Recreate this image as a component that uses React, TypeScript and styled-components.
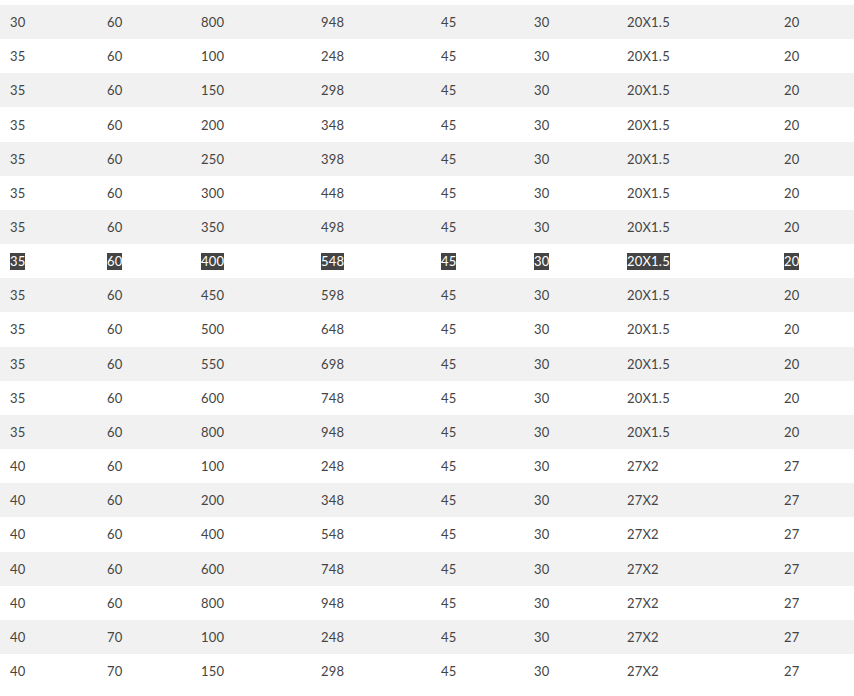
import React from "react";
import styled, { createGlobalStyle } from "styled-components";

const Global = createGlobalStyle`
  html, body { margin: 0; padding: 0; background: #fff; }
  body { font-family: "Lato", "Open Sans", sans-serif; }
`;

const Wrap = styled.div`
  padding-top: 5px;
  width: 854px;
  overflow: hidden;
`;

const Table = styled.table`
  width: 854px;
  border-collapse: collapse;
  border-spacing: 0;
  table-layout: fixed;
`;

const Row = styled.tr<{ $odd: boolean }>`
  background: ${(p) => (p.$odd ? "#f1f1f1" : "#ffffff")};
`;

const Cell = styled.td`
  height: 34.17px;
  box-sizing: border-box;
  padding: 1px 0 0 10px;
  font-size: 13px;
  font-weight: 400;
  color: #444;
  vertical-align: middle;
  white-space: nowrap;
  letter-spacing: 0.2px;
`;

const Sel = styled.span<{ $on: boolean }>`
  background: ${(p) => (p.$on ? "#444" : "transparent")};
  color: ${(p) => (p.$on ? "#fff" : "inherit")};
  line-height: 17px;
  display: inline-block;
`;

const widths = [97, 94, 120, 120, 93, 93, 157, 80];

const rows: string[][] = [
  ["30", "60", "800"],
  ["35", "60", "100"],
  ["35", "60", "150"],
  ["35", "60", "200"],
  ["35", "60", "250"],
  ["35", "60", "300"],
  ["35", "60", "350"],
  ["35", "60", "400"],
  ["35", "60", "450"],
  ["35", "60", "500"],
  ["35", "60", "550"],
  ["35", "60", "600"],
  ["35", "60", "800"],
  ["40", "60", "100"],
  ["40", "60", "200"],
  ["40", "60", "400"],
  ["40", "60", "600"],
  ["40", "60", "800"],
  ["40", "70", "100"],
  ["40", "70", "150"],
].map(([a, b, c]) => {
  const d = String(parseInt(c, 10) + 148);
  const is40 = a === "40";
  return [a, b, c, d, "45", "30", is40 ? "27X2" : "20X1.5", is40 ? "27" : "20"];
});

export default function App() {
  return (
    <Wrap>
      <Global />
      <Table>
        <colgroup>
          {widths.map((w, i) => (
            <col key={i} style={{ width: w }} />
          ))}
        </colgroup>
        <tbody>
          {rows.map((r, i) => (
            <Row key={i} $odd={i % 2 === 0}>
              {r.map((v, j) => (
                <Cell key={j}>
                  <Sel $on={i === 7}>{v}</Sel>
                </Cell>
              ))}
            </Row>
          ))}
        </tbody>
      </Table>
    </Wrap>
  );
}
